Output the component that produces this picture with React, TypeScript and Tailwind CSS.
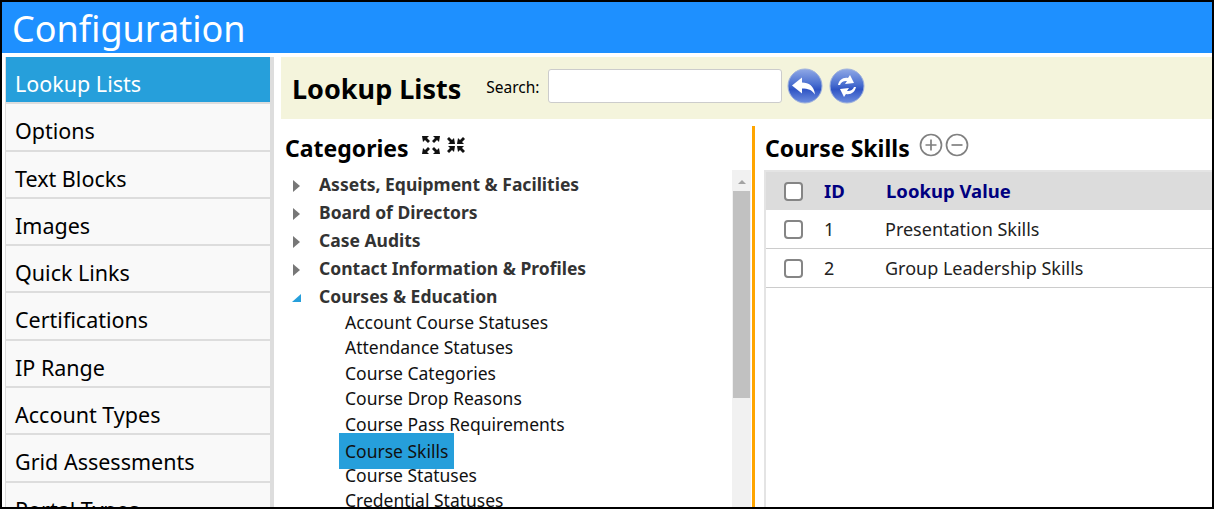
import React from "react";

const F = "[font-family:'Noto_Sans','Liberation_Sans',sans-serif]";
const nav = ["Lookup Lists","Options","Text Blocks","Images","Quick Links","Certifications","IP Range","Account Types","Grid Assessments","Portal Types"];
const roots = ["Assets, Equipment & Facilities","Board of Directors","Case Audits","Contact Information & Profiles"];
const kids = ["Account Course Statuses","Attendance Statuses","Course Categories","Course Drop Reasons","Course Pass Requirements","Course Skills","Course Statuses","Credential Statuses"];

function Arrow({ d }: { d: string }) {
  return <path d={d} fill="#111" />;
}

function Expand() {
  return (
    <svg width="20" height="20" viewBox="0 0 20 20">
      <Arrow d="M1 1h7L6 3l3 3-2 2-3-3-2 2z" />
      <Arrow d="M19 1h-7l2 2-3 3 2 2 3-3 2 2z" />
      <Arrow d="M1 19h7l-2-2 3-3-2-2-3 3-2-2z" />
      <Arrow d="M19 19h-7l2-2-3-3 2-2 3 3 2-2z" />
    </svg>
  );
}
function Compress() {
  return (
    <svg width="20" height="20" viewBox="0 0 20 20">
      <Arrow d="M9 9H2l2-2-3-3 2-2 3 3 2-2z" />
      <Arrow d="M11 9h7l-2-2 3-3-2-2-3 3-2-2z" />
      <Arrow d="M9 11H2l2 2-3 3 2 2 3-3 2 2z" />
      <Arrow d="M11 11h7l-2 2 3 3-2 2-3-3-2 2z" />
    </svg>
  );
}
function Round({ id, children }: { id: string; children: React.ReactNode }) {
  return (
    <svg width="36" height="36" viewBox="0 0 36 36">
      <defs>
        <linearGradient id={id} x1="0" y1="0" x2="0" y2="1">
          <stop offset="0" stopColor="#8fa8e6" />
          <stop offset="0.45" stopColor="#4a6fd0" />
          <stop offset="0.6" stopColor="#2f54c4" />
          <stop offset="1" stopColor="#6f8fe0" />
        </linearGradient>
      </defs>
      <circle cx="18" cy="18" r="17" fill={`url(#${id})`} stroke="#9fb2dc" strokeWidth="1" />
      {children}
    </svg>
  );
}
function CircleSign({ minus }: { minus?: boolean }) {
  return (
    <svg width="24" height="24" viewBox="0 0 24 24" fill="none" stroke="#808080" strokeWidth="1.7">
      <circle cx="12" cy="12" r="10.5" />
      <path d={minus ? "M6.5 12h11" : "M6.5 12h11M12 6.5v11"} />
    </svg>
  );
}
function Box() {
  return <span className="block w-[19px] h-[19px] rounded-[4px] border-2 border-[#858585] bg-white" />;
}

export default function App() {
  return (
    <div className={`${F} w-[1214px] h-[509px] overflow-hidden border-2 border-black bg-white flex flex-col text-black`}>
      <div className="h-[51px] shrink-0 bg-[#1e90ff] pl-[10px] text-white text-[36px] leading-[54px]">Configuration</div>
      <div className="flex flex-1 min-h-0 pt-[4px]">
        <div className="w-[269px] shrink-0 ml-[3px] border-r-[4px] border-l border-[#dddddd] border-t-0 bg-[#f9f9f9] overflow-hidden">
          {nav.map((n, i) => (
            <div key={n} className={`h-[47.3px] border-b-2 border-[#dddddd] pl-[9px] text-[21.5px] leading-[53px] ${i === 0 ? "bg-[#269fdb] text-white" : ""}`}>{n}</div>
          ))}
        </div>
        <div className="flex-1 min-w-0 pl-[7px] flex flex-col">
          <div className="h-[62px] shrink-0 bg-[#f4f4dc] flex items-center pl-[11px]">
            <span className="font-bold text-[27px] leading-none">Lookup Lists</span>
            <span className="ml-[25px] text-[15.5px]">Search:</span>
            <span className="ml-[9px] block w-[234px] h-[34px] bg-white border border-[#cccccc] rounded-[3px] mt-[-4px]" />
            <span className="ml-[5px] mt-[-4px] flex gap-[6px]">
              <Round id="g1">
                <path d="M5 17.5 15 9.5v5c7 0 12 3.5 13 12-3-4.500-7-6-13-6v5z" fill="#fff" />
              </Round>
              <Round id="g2">
                <path d="M9 17c1-5 5-8 10-7l2-3 4 8-9 1 2-3c-3-.5-6 1-7 4zM27 19c-1 5-5 8-10 7l-2 3-4-8 9-1-2 3c3 .5 6-1 7-4z" fill="#fff" />
              </Round>
            </span>
          </div>
          <div className="flex flex-1 min-h-0 pt-[7px]">
            <div className="w-[472px] shrink-0 flex flex-col pl-[4px] min-h-0">
              <div className="h-[44px] shrink-0 flex items-center">
                <span className="font-bold text-[23px] leading-none">Categories</span>
                <span className="ml-[12px] flex gap-[5px] mt-[-6px]"><Expand /><Compress /></span>
              </div>
              <div className="flex-1 min-h-0 flex">
                <div className="w-[447px] shrink-0 overflow-hidden">
                  {roots.map((r) => (
                    <div key={r} className="h-[28px] flex items-center text-[#333333] font-bold text-[17.5px] pl-[7px]">
                      <svg width="9" height="12" viewBox="0 0 9 12" className="mt-[4px]"><path d="M1 0l7 6-7 6z" fill="#777777" /></svg>
                      <span className="ml-[18px]">{r}</span>
                    </div>
                  ))}
                  <div className="h-[28px] flex items-center text-[#333333] font-bold text-[17.5px] pl-[7px]">
                    <svg width="9" height="12" viewBox="0 0 9 12" className="mt-[2px]"><path d="M9 3v8H0z" fill="#269fdb" /></svg>
                    <span className="ml-[18px]">Courses &amp; Education</span>
                  </div>
                  <div className="pl-[60px] text-[17.5px] text-[#111111]">
                    {kids.map((k) => (
                      <div key={k} className="h-[25.45px] leading-[25.45px] relative">
                        {k === "Course Skills" ? (
                          <span className="absolute left-[-6px] top-[-4px] h-[36px] leading-[36px] px-[6px] bg-[#269fdb]">{k}</span>
                        ) : k}
                      </div>
                    ))}
                  </div>
                </div>
                <div className="w-[19px] shrink-0 bg-[#f1f1f1] flex flex-col items-center">
                  <svg width="10" height="21" viewBox="0 0 10 21"><path d="M1 14l4-4 4 4z" fill="#a3a3a3" /></svg>
                  <div className="w-[17px] h-[207px] bg-[#c1c1c1]" />
                </div>
              </div>
            </div>
            <div className="w-[3px] shrink-0 bg-[#ffa500] ml-[-1px]" />
            <div className="flex-1 min-w-0 pl-[9px] flex flex-col">
              <div className="h-[44px] shrink-0 flex items-center pl-[1px]">
                <span className="font-bold text-[23px] leading-none">Course Skills</span>
                <span className="ml-[9px] flex gap-[2px] mt-[-6px]"><CircleSign /><CircleSign minus /></span>
              </div>
              <div className="flex-1 border-l-2 border-t-2 border-[#e4e4e4]">
                <div className="h-[38px] bg-[#dcdcdc] flex items-center font-bold text-[#000080] text-[18.5px]">
                  <span className="ml-[18px]"><Box /></span>
                  <span className="ml-[21px] w-[62px]">ID</span>
                  <span>Lookup Value</span>
                </div>
                {[["1","Presentation Skills"],["2","Group Leadership Skills"]].map(([a, b]) => (
                  <div key={a} className="h-[38px] mt-[1px] first:mt-[1px] border-b border-[#cccccc] flex items-center text-[18px] text-[#222222] border-t-0">
                    <span className="ml-[18px]"><Box /></span>
                    <span className="ml-[21px] w-[61px]">{a}</span>
                    <span>{b}</span>
                  </div>
                ))}
              </div>
            </div>
          </div>
        </div>
      </div>
    </div>
  );
}
